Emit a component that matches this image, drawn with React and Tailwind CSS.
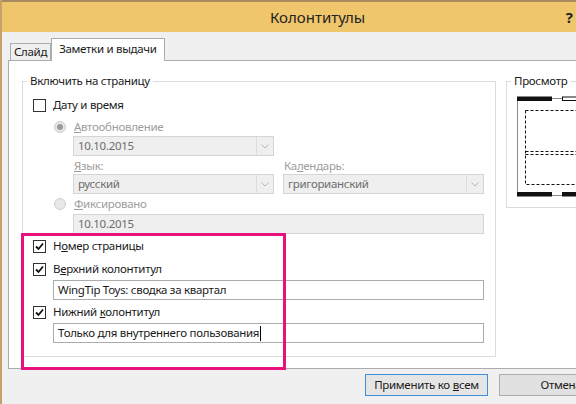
import React from 'react';

const font = "font-['Noto_Sans',sans-serif]";
const txt = 'text-[11.5px] leading-[16px] tracking-[-0.3px]';

const Check = ({ checked }) => (
  <span className="flex h-[13px] w-[13px] shrink-0 items-center justify-center border border-[#333] bg-white">
    {checked && (
      <svg width="11" height="11" viewBox="0 0 11 11">
        <path d="M2 5.5 L4.5 8 L9 2.5" fill="none" stroke="#111" strokeWidth="1.8" />
      </svg>
    )}
  </span>
);

const Radio = ({ selected }) => (
  <span className="flex h-[12px] w-[12px] shrink-0 items-center justify-center rounded-full border border-[#cfcfcf] bg-[#e8e8e8]">
    {selected && <span className="h-[6px] w-[6px] rounded-full bg-[#9a9a9a]" />}
  </span>
);

const Combo = ({ value }) => (
  <div className="flex h-[20px] w-[201px] items-center border border-[#d5d5d5] bg-[#efefef]">
    <span className={`flex-1 pl-[4px] text-[#6d6d6d] ${txt}`}>{value}</span>
    <span className="flex h-full w-[17px] items-center justify-center border-l border-[#dcdcdc]">
      <svg width="8" height="5" viewBox="0 0 8 5">
        <path d="M0.5 0.5 L4 4 L7.5 0.5" fill="none" stroke="#b5b5b5" strokeWidth="1" />
      </svg>
    </span>
  </div>
);

const TextBox = ({ value, cursor }) => (
  <div className={`flex h-[20px] w-[431px] items-center border border-[#ababab] bg-white pl-[4px] text-[#1a1a1a] ${txt}`}>
    {value}
    {cursor && <span className="ml-[1px] h-[15px] w-px bg-black" />}
  </div>
);

const CheckRow = ({ checked, children }) => (
  <div className="flex h-[16px] items-center pl-[10px]">
    <Check checked={checked} />
    <span className={`ml-[7px] text-[#1a1a1a] ${txt}`}>{children}</span>
  </div>
);

export default function App() {
  return (
    <div className={`relative flex h-[404px] w-[576px] flex-col overflow-hidden border-l-2 border-[#c5a26c] bg-[#f0f0f0] ${font}`}>
      {/* Title bar */}
      <div className="flex h-[32px] shrink-0 items-center border-t-2 border-[#a98b5f] bg-[#f0c66c] pl-[268px]">
        <span className="text-[15px] leading-[20px] text-[#222]">Колонтитулы</span>
        <span className="ml-auto mr-[3px] text-[15px] font-bold text-[#222]">?</span>
      </div>

      <div className="ml-[6px] pt-[6px]">
        {/* Tabs */}
        <div className="flex h-[22px] items-end pl-[2px]">
          <div className={`flex h-[17px] items-center border border-b-0 border-[#acacac] bg-[#f0f0f0] px-[3px] text-[#1a1a1a] ${txt}`}>
            Слайд
          </div>
          <div className={`relative z-10 -mb-px flex h-[23px] items-center border border-b-0 border-[#acacac] bg-white px-[7px] pb-[2px] text-[#1a1a1a] ${txt}`}>
            Заметки и выдачи
          </div>
        </div>

        {/* Panel */}
        <div className="flex h-[309px] items-start border border-r-0 border-[#acacac] bg-white">
          <fieldset className="ml-[13px] mt-[12px] h-[284px] w-[474px] shrink-0 border border-[#dcdcdc]">
            <legend className={`ml-[4px] px-[3px] text-[#1a1a1a] ${txt}`}>Включить на страницу</legend>
            <div className="mt-[8px]">
              <CheckRow><u>Д</u>ату и время</CheckRow>
            </div>
            <div className="mt-[6px] flex h-[16px] items-center pl-[31px]">
              <Radio selected />
              <span className={`ml-[8px] text-[#9d9d9d] ${txt}`}><u>А</u>втообновление</span>
            </div>
            <div className="mt-[1px] pl-[50px]">
              <Combo value="10.10.2015" />
            </div>
            <div className={`mt-[2px] flex h-[16px] pl-[51px] text-[#9d9d9d] ${txt}`}>
              <span className="w-[210px]"><u>Я</u>зык:</span>
              <span>Ка<u>л</u>ендарь:</span>
            </div>
            <div className="flex gap-[9px] pl-[50px]">
              <Combo value="русский" />
              <Combo value="григорианский" />
            </div>
            <div className="mt-[2px] flex h-[16px] items-center pl-[31px]">
              <Radio />
              <span className={`ml-[8px] text-[#9d9d9d] ${txt}`}><u>Ф</u>иксировано</span>
            </div>
            <div className="mt-[2px] pl-[50px]">
              <div className={`flex h-[20px] w-[411px] items-center border border-[#d5d5d5] bg-[#efefef] pl-[4px] text-[#6d6d6d] ${txt}`}>
                10.10.2015
              </div>
            </div>
            <div className="mt-[4px]">
              <CheckRow checked>Н<u>о</u>мер страницы</CheckRow>
            </div>
            <div className="mt-[7px]">
              <CheckRow checked>В<u>е</u>рхний колонтитул</CheckRow>
            </div>
            <div className="mt-[3px] pl-[30px]">
              <TextBox value="WingTip Toys: сводка за квартал" />
            </div>
            <div className="mt-[4px]">
              <CheckRow checked>Нижний <u>к</u>олонтитул</CheckRow>
            </div>
            <div className="mt-[3px] pl-[30px]">
              <TextBox value="Только для внутреннего пользования" cursor />
            </div>
          </fieldset>

          <fieldset className="ml-[10px] mt-[12px] h-[135px] w-[100px] shrink-0 border border-[#dcdcdc]">
            <legend className={`ml-[4px] px-[3px] text-[#1a1a1a] ${txt}`}>Просмотр</legend>
            <svg className="ml-[10px] mt-[7px]" width="80" height="102" viewBox="0 0 80 102">
              <path d="M0.5 3 V99.5 H80" fill="none" stroke="#8a8a8a" strokeWidth="1" />
              <path d="M35 2.5 H46" fill="none" stroke="#8a8a8a" strokeWidth="1" />
              <rect x="0.5" y="1" width="34" height="3.5" fill="#111" stroke="#111" strokeWidth="1" />
              <rect x="45.5" y="1" width="30" height="3.5" fill="#fff" stroke="#111" strokeWidth="1" />
              <rect x="8.5" y="14.5" width="80" height="74" fill="none" stroke="#111" strokeWidth="1" strokeDasharray="3 2" />
              <path d="M8.5 55.5 H80 M8.5 58.5 H80" fill="none" stroke="#111" strokeWidth="1" strokeDasharray="3 2" />
              <rect x="0.5" y="96.5" width="34" height="3.5" fill="#111" stroke="#111" strokeWidth="1" />
              <rect x="45.5" y="96.5" width="30" height="3.5" fill="#111" stroke="#111" strokeWidth="1" />
            </svg>
          </fieldset>
        </div>

        {/* Buttons */}
        <div className="mt-[5px] flex pl-[357px]">
          <button className={`flex h-[22px] w-[123px] shrink-0 items-center justify-center whitespace-nowrap border border-[#3c8fd8] bg-[#e5e5e5] text-[#1a1a1a] ${txt}`}>
            Применить ко <u className="ml-[3px]">в</u>сем
          </button>
          <button className={`ml-[11px] flex h-[22px] w-[124px] shrink-0 items-center justify-center whitespace-nowrap border border-[#adadad] bg-[#e1e1e1] text-[#1a1a1a] ${txt}`}>
            Отмена
          </button>
        </div>
      </div>

      {/* Highlight annotation */}
      <div className="absolute left-[19px] top-[233px] h-[137px] w-[265px] border-[3px] border-[#e8127f]" />
    </div>
  );
}
